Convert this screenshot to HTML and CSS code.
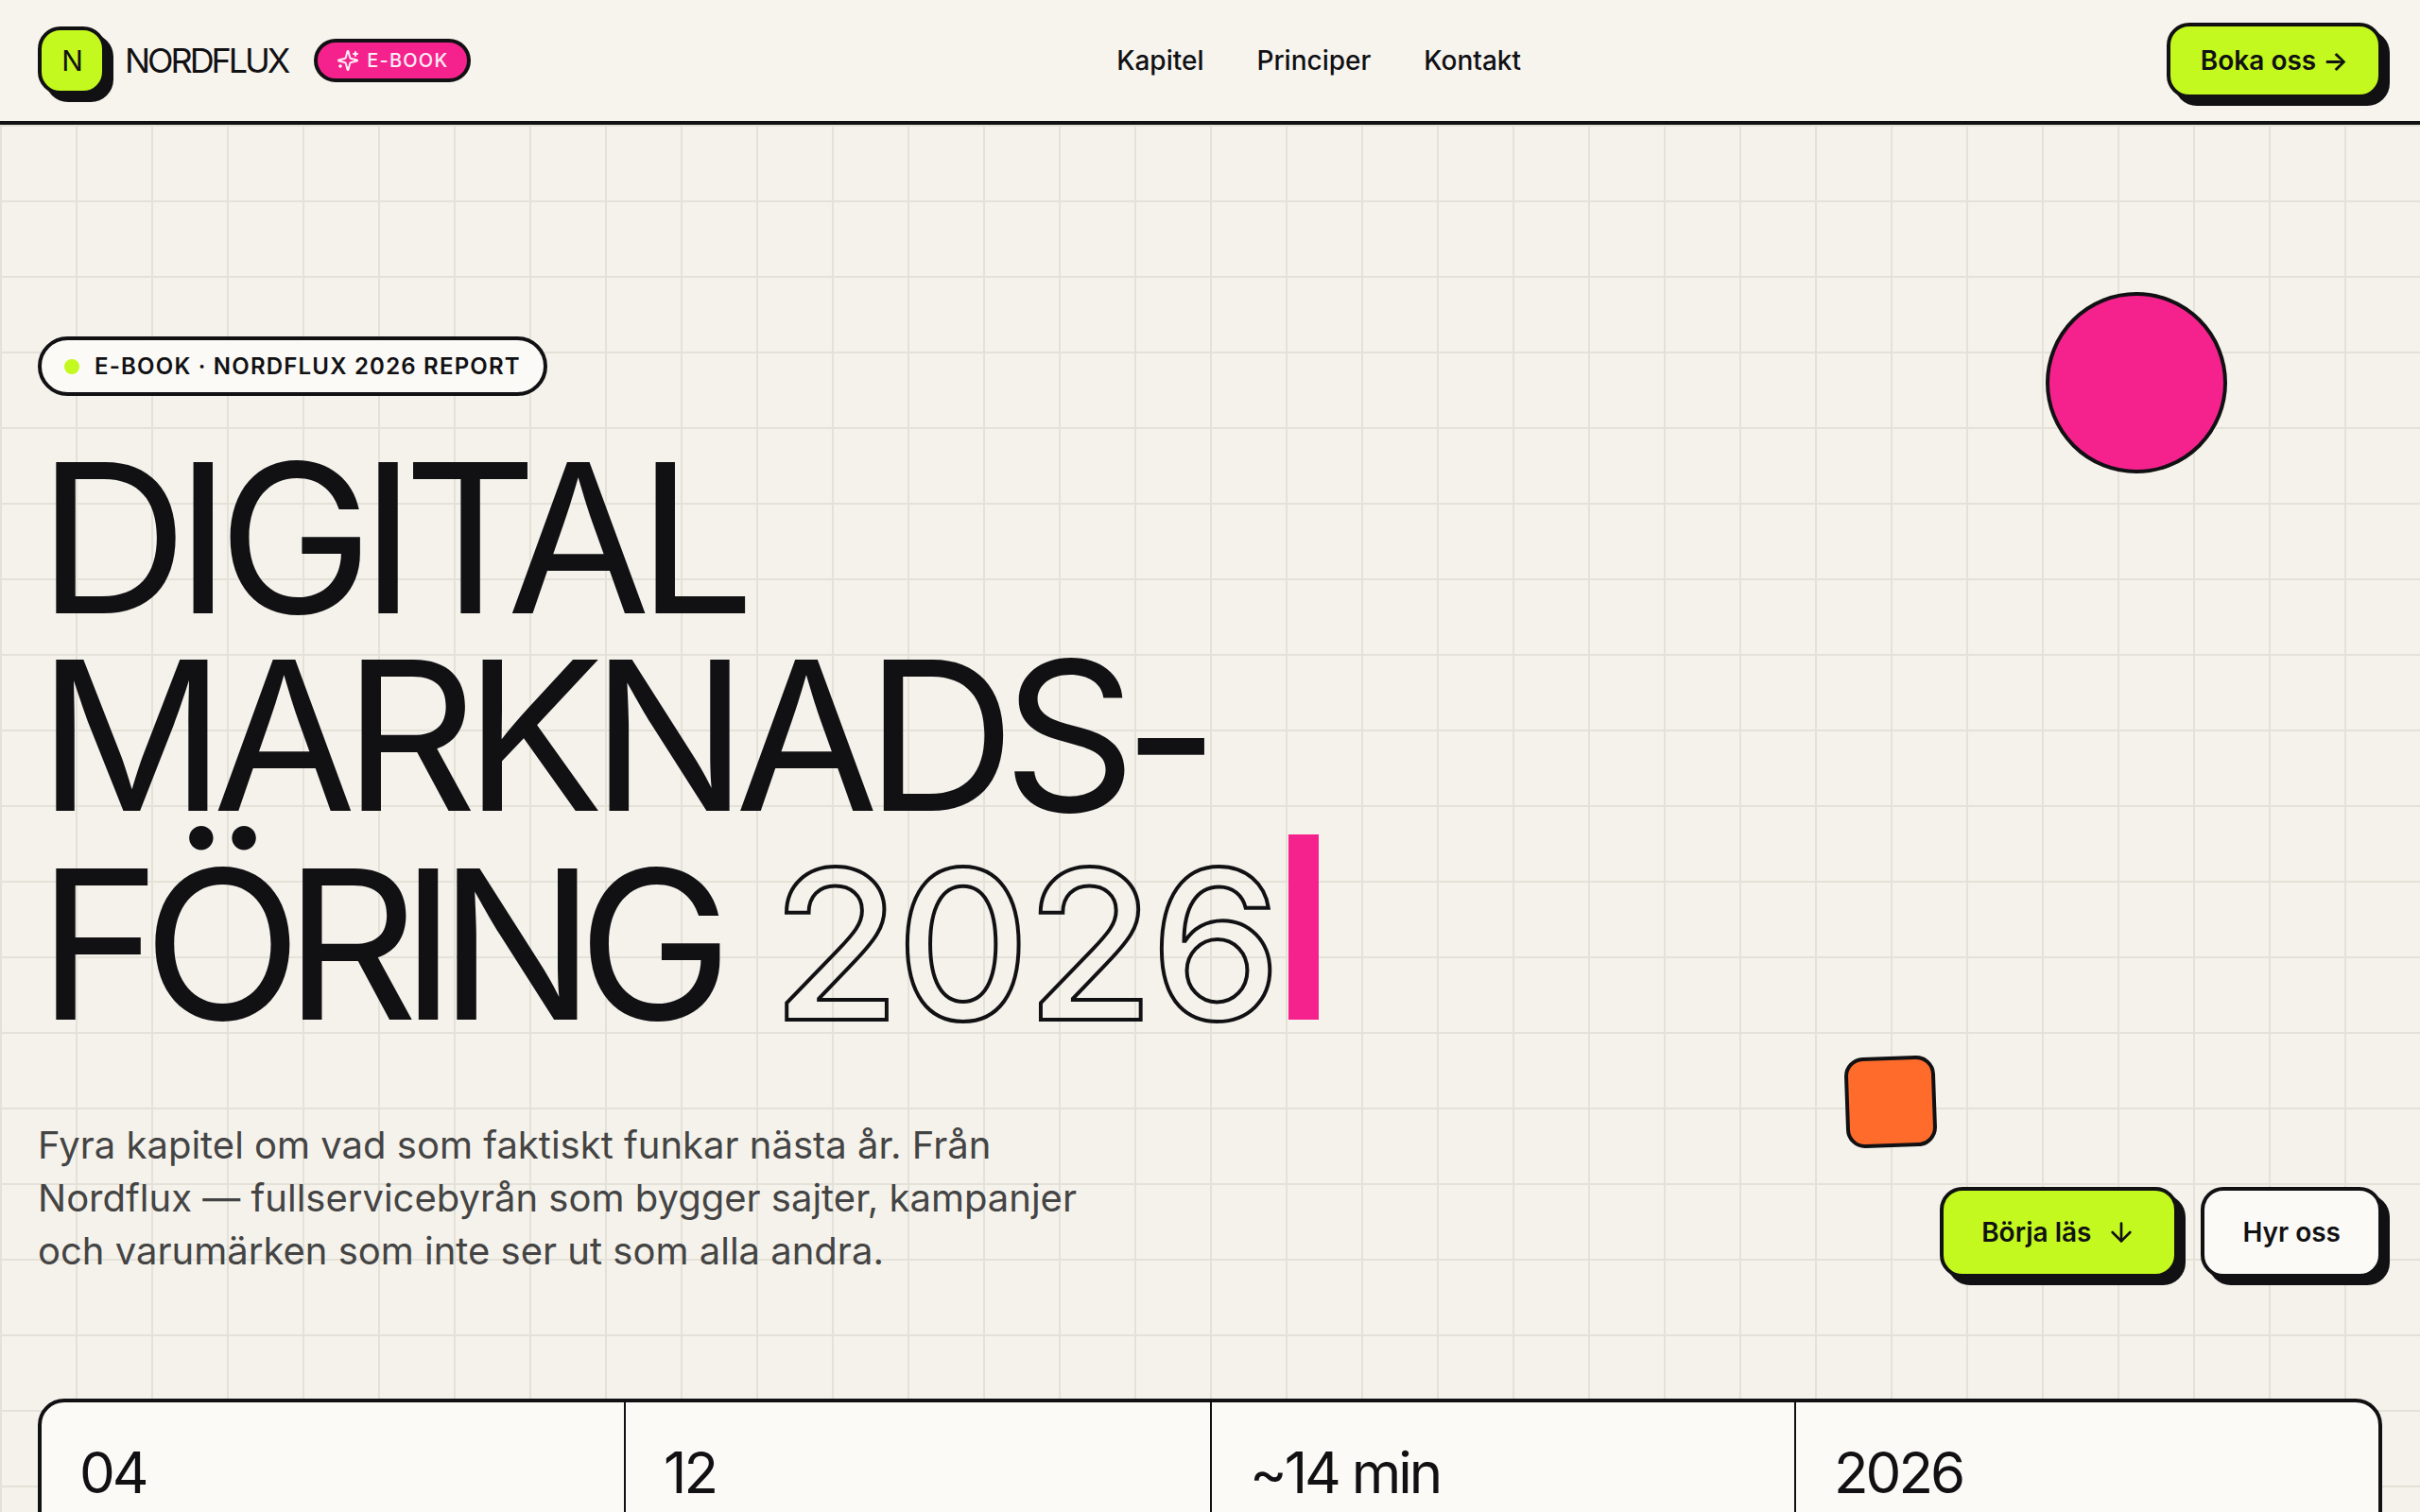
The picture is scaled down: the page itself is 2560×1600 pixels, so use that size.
FILE: index.html
```html
<!DOCTYPE html>
<html lang="sv">
<head>
  <meta charset="UTF-8">
  <meta name="viewport" content="width=device-width, initial-scale=1.0">
  <title>Nordflux – Digital marknadsföring 2026</title>
  <link rel="stylesheet" href="styles.css">
</head>
<body>
  <header class="topbar">
    <div class="brand">
      <div class="brand-mark">N</div>
      <div class="brand-name">NORDFLUX</div>
      <div class="brand-tag">
        <svg class="tag-icon" viewBox="0 0 24 24" fill="none" stroke="currentColor" stroke-width="2" stroke-linecap="round" stroke-linejoin="round">
          <path d="M9.937 15.5A2 2 0 0 0 8.5 14.063l-6.135-1.582a.5.5 0 0 1 0-.962L8.5 9.936A2 2 0 0 0 9.937 8.5l1.582-6.135a.5.5 0 0 1 .963 0L14.063 8.5A2 2 0 0 0 15.5 9.937l6.135 1.581a.5.5 0 0 1 0 .964L15.5 14.063a2 2 0 0 0-1.437 1.437l-1.582 6.135a.5.5 0 0 1-.963 0z"/>
          <path d="M20 3v4"/>
          <path d="M22 5h-4"/>
          <path d="M4 17v2"/>
          <path d="M5 18H3"/>
        </svg>
        <span>E-BOOK</span>
      </div>
    </div>
    <nav class="nav">
      <a href="#">Kapitel</a>
      <a href="#">Principer</a>
      <a href="#">Kontakt</a>
    </nav>
    <a class="btn btn-small" href="#">Boka oss →</a>
  </header>

  <main class="hero">
    <div class="shape shape-circle"></div>
    <div class="shape shape-square"></div>

    <div class="pill"><span class="pill-dot"></span>E-BOOK · NORDFLUX 2026 REPORT</div>

    <h1 class="title">
      <span class="title-line">DIGITAL</span>
      <span class="title-line">MARKNADS-</span>
      <span class="title-line"><span class="title-tight">FÖRING</span> <span class="title-outline">2026</span><span class="title-cursor"></span></span>
    </h1>

    <div class="intro">
      <p class="lead">Fyra kapitel om vad som faktiskt funkar nästa år. Från Nordflux — fullservicebyrån som bygger sajter, kampanjer och varumärken som inte ser ut som alla andra.</p>
      <div class="actions">
        <a class="btn" href="#">
          Börja läs
          <svg class="btn-icon" viewBox="0 0 24 24" fill="none" stroke="currentColor" stroke-width="2" stroke-linecap="round" stroke-linejoin="round">
            <path d="M12 5v14"/>
            <path d="m19 12-7 7-7-7"/>
          </svg>
        </a>
        <a class="btn btn-white" href="#">Hyr oss</a>
      </div>
    </div>

    <section class="stats">
      <div class="stat">04</div>
      <div class="stat">12</div>
      <div class="stat">~14 min</div>
      <div class="stat">2026</div>
    </section>
  </main>
</body>
</html>
```

FILE: styles.css
```css
html, body {
  height: 100%;
  overflow: hidden;
}

body {
  margin: 0;
  font-family: Inter, "Liberation Sans", sans-serif;
  background-color: #f5f2eb;
  color: #111114;
}

a {
  color: inherit;
  text-decoration: none;
}

/* top bar */
.topbar {
  display: flex;
  align-items: center;
  justify-content: space-between;
  height: 128px;
  padding: 0 40px;
  background-color: #f7f4ee;
  border-bottom: 4px solid #111114;
}

.brand {
  display: flex;
  align-items: center;
}

.brand-mark {
  display: flex;
  align-items: center;
  justify-content: center;
  box-sizing: border-box;
  width: 72px;
  height: 72px;
  background-color: #c3f91e;
  border: 4px solid #111114;
  border-radius: 24px;
  box-shadow: 8px 8px 0 #111114;
  font-size: 30px;
  letter-spacing: -0.04em;
}

.brand-name {
  margin-left: 20px;
  font-size: 36px;
  letter-spacing: -0.085em;
}

.brand-tag {
  display: flex;
  align-items: center;
  gap: 8px;
  box-sizing: border-box;
  height: 46px;
  margin-left: 28px;
  padding: 0 20px;
  background-color: #f5228d;
  border: 4px solid #111114;
  border-radius: 999px;
  color: #fdeef6;
  font-size: 20px;
  font-weight: 500;
  letter-spacing: 0.06em;
}

.tag-icon {
  width: 24px;
  height: 24px;
}

.nav {
  display: flex;
  gap: 56px;
  font-size: 28px;
  font-weight: 500;
}

/* buttons */
.btn {
  display: flex;
  align-items: center;
  justify-content: center;
  gap: 16px;
  box-sizing: border-box;
  height: 96px;
  padding: 0 40px;
  background-color: #c3f91e;
  border: 4px solid #111114;
  border-radius: 24px;
  box-shadow: 8px 8px 0 #111114;
  font-size: 28px;
  font-weight: 600;
}

.btn-small {
  height: 80px;
  padding: 0 32px;
}

.btn-white {
  background-color: #fbfaf6;
}

.btn-icon {
  width: 32px;
  height: 32px;
}

/* hero */
.hero {
  position: relative;
  padding: 224px 40px 0;
  background-color: #f5f2eb;
  background-image:
    linear-gradient(#e4e1d8 2px, transparent 2px),
    linear-gradient(90deg, #e4e1d8 2px, transparent 2px);
  background-size: 80px 80px;
}

.shape {
  position: absolute;
  box-sizing: border-box;
  border: 4px solid #111114;
}

.shape-circle {
  top: 177px;
  left: 2164px;
  width: 192px;
  height: 192px;
  background-color: #f5228d;
  border-radius: 50%;
}

.shape-square {
  top: 986px;
  left: 1952px;
  width: 96px;
  height: 96px;
  background-color: #ff6b2b;
  border-radius: 20px;
  transform: rotate(-2deg);
}

.pill {
  display: inline-flex;
  align-items: center;
  gap: 16px;
  box-sizing: border-box;
  height: 63px;
  padding: 0 24px;
  background-color: #fbfaf6;
  border: 4px solid #111114;
  border-radius: 999px;
  font-size: 24px;
  font-weight: 600;
  letter-spacing: 0.05em;
}

.pill-dot {
  width: 16px;
  height: 16px;
  background-color: #c3f91e;
  border-radius: 50%;
}

.title {
  margin: 46px 0 0;
  font-size: 220px;
  font-weight: 400;
  line-height: 209px;
  letter-spacing: -0.062em;
}

.title-line {
  display: block;
}

.title-tight {
  margin-right: 12px;
  letter-spacing: -0.085em;
}

.title-outline {
  color: transparent;
  font-weight: 500;
  letter-spacing: -0.02em;
  -webkit-text-stroke: 4px #111114;
}

.title-cursor {
  display: inline-block;
  width: 32px;
  height: 196px;
  margin-left: 12px;
  background-color: #f5228d;
}

.intro {
  display: flex;
  align-items: flex-end;
  justify-content: space-between;
  margin-top: 80px;
}

.lead {
  max-width: 1120px;
  margin: 0;
  color: #444;
  font-size: 40px;
  line-height: 56px;
}

.actions {
  display: flex;
  gap: 24px;
}

.stats {
  display: grid;
  grid-template-columns: 618px 620px 618px 1fr;
  margin-top: 128px;
  background-color: #fbfaf6;
  border: 4px solid #111114;
  border-radius: 28px;
}

.stat {
  height: 240px;
  padding: 38px 40px 0;
  border-right: 2px solid #111114;
  font-size: 60px;
  line-height: 72px;
  letter-spacing: -0.05em;
}

.stat:last-child {
  border-right: none;
}
```
